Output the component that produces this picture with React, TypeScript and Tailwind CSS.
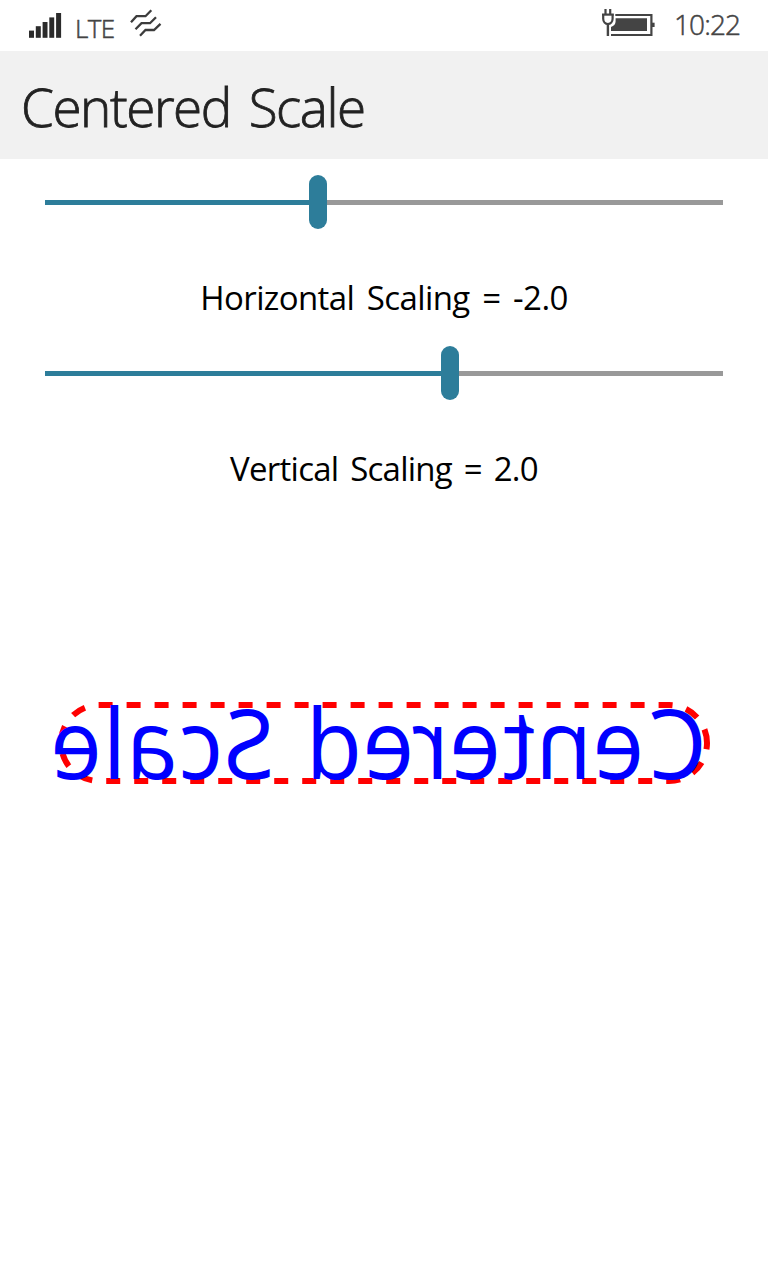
import React from "react";

function SignalIcon() {
  return (
    <svg width="33" height="25" viewBox="0 0 33 25" fill="#2b2b2b" className="shrink-0">
      <rect x="0" y="17.6" width="5" height="7.2" />
      <rect x="6.8" y="13.2" width="5" height="11.6" />
      <rect x="13.6" y="9" width="4.9" height="15.8" />
      <rect x="20.3" y="4.4" width="4.9" height="20.4" />
      <rect x="27.1" y="0" width="5" height="24.8" />
    </svg>
  );
}

function WavesIcon() {
  return (
    <svg width="32" height="28" viewBox="0 0 32 28" fill="none" stroke="#3c3c3c" strokeWidth="2.3" className="shrink-0">
      <path d="M1 13.2L6.5 7.2H15.5L21.3 1.2" />
      <path d="M5.5 20.2L11.5 14.2H20L26 8.2" />
      <path d="M10 26.8L15.5 21H24L30.5 14.8" />
    </svg>
  );
}

function BatteryIcon() {
  return (
    <svg width="54" height="29" viewBox="0 0 54 29" fill="none" stroke="#444444" className="shrink-0">
      <path d="M4.5 1v5M9.2 1v5" strokeWidth="2.2" />
      <path d="M1 6.6H12.8" strokeWidth="2.2" />
      <path d="M2.2 6.6V10.8A4.7 5.2 0 0 0 11.6 10.8V6.6" strokeWidth="2.2" />
      <path d="M6.9 15.5V28" strokeWidth="2.4" />
      <path d="M14.3 7H50.4V27H10" strokeWidth="2.2" />
      <rect x="51" y="14.7" width="2.6" height="4.3" fill="#444444" stroke="none" />
      <path d="M14.6 10.2H46V23H10V19C12.8 18 14.6 16.2 14.6 13.5Z" fill="#444444" stroke="none" />
    </svg>
  );
}

function Slider({ value }: { value: number }) {
  return (
    <div className="flex h-[54px] w-[678px] items-center">
      <div className="h-[5px] bg-[#2d7d9a]" style={{ width: value - 9 }} />
      <div className="h-[54px] w-[18px] rounded-full bg-[#2d7d9a]" />
      <div className="h-[5px] flex-1 bg-[#999999]" />
    </div>
  );
}

function ScaledCanvas() {
  return (
    <svg width="768" height="180" viewBox="0 650 768 180" className="block">
      <path
        d="M707 743A38 38 0 0 0 669 705H99A38 38 0 0 0 99 781H669A38 38 0 0 0 707 743"
        fill="none"
        stroke="#ff0000"
        strokeWidth="6"
        strokeDasharray="14 14"
      />
      <text
        transform="translate(767 0) scale(-0.95 1)"
        x="63.5 129.3 184.2 244.3 279.9 334.8 371.4 426.2 480 518.7 572.5 620.9 674.8 699.9"
        y="779"
        fill="#0000ff"
        fontFamily="'Open Sans', sans-serif"
        fontSize="97"
      >
        Centered Scale
      </text>
    </svg>
  );
}

export default function App() {
  return (
    <div className="flex h-[1280px] w-[768px] flex-col overflow-hidden bg-white font-['Open_Sans',sans-serif]">
      <div className="flex h-[51px] shrink-0 items-start justify-between pl-[29px] pr-[28px] text-[#444444]">
        <div className="flex items-start">
          <div className="pt-[13px]"><SignalIcon /></div>
          <span className="ml-[13px] mt-[10px] w-[55px] text-[26px] font-light leading-9 tracking-[-0.6px] [-webkit-text-stroke:0.5px_#444444]">LTE</span>
          <div className="pt-[9px]"><WavesIcon /></div>
        </div>
        <div className="flex items-start">
          <div className="mr-[19px] pt-[8px]"><BatteryIcon /></div>
          <span className="mt-[6px] w-[66px] whitespace-nowrap text-[28px] font-light leading-9 tracking-[-0.9px] [-webkit-text-stroke:0.5px_#444444]">10:22</span>
        </div>
      </div>
      <h1 className="h-[108px] shrink-0 bg-[#f1f1f1] pl-[21px] pt-[16px] text-[53px] font-light leading-[80px] tracking-[-1.45px] text-[#222222] [-webkit-text-stroke:0.8px_#222222] [word-spacing:5.5px]">
        Centered Scale
      </h1>
      <main className="flex flex-col items-center pt-4 text-black">
        <Slider value={273} />
        <p className="mt-[45px] h-12 whitespace-nowrap text-[33px] leading-12 tracking-[-0.6px] [word-spacing:4.6px]">Horizontal Scaling = -2.0</p>
        <div className="mt-6"><Slider value={405} /></div>
        <p className="mt-[45px] h-12 whitespace-nowrap text-[33px] leading-12 tracking-[-0.75px] [word-spacing:4px]">Vertical Scaling = 2.0</p>
        <div className="mt-[157px]"><ScaledCanvas /></div>
      </main>
    </div>
  );
}
